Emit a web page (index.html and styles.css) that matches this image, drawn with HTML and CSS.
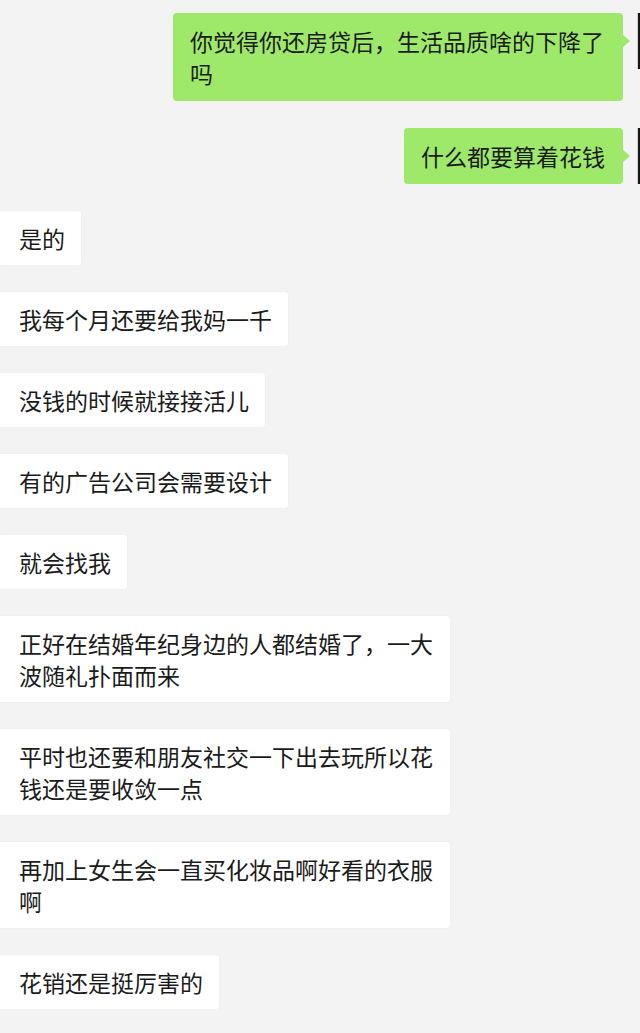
FILE: index.html
```html
<!DOCTYPE html>
<html lang="zh-CN">
<head>
    <meta charset="UTF-8">
    <meta name="viewport" content="width=device-width, initial-scale=1.0">
    <title>聊天记录</title>
    <link rel="stylesheet" href="styles.css">
</head>
<body>
    <div class="chat">
        <!-- 我发的 -->
        <div class="row row-me">
            <div class="bubble bubble-me">你觉得你还房贷后，生活品质啥的下降了吗</div>
            <div class="avatar"></div>
        </div>
        <div class="row row-me">
            <div class="bubble bubble-me">什么都要算着花钱</div>
            <div class="avatar"></div>
        </div>

        <!-- 对方 -->
        <div class="row row-other"><div class="bubble bubble-other">是的</div></div>
        <div class="row row-other"><div class="bubble bubble-other">我每个月还要给我妈一千</div></div>
        <div class="row row-other"><div class="bubble bubble-other">没钱的时候就接接活儿</div></div>
        <div class="row row-other"><div class="bubble bubble-other">有的广告公司会需要设计</div></div>
        <div class="row row-other"><div class="bubble bubble-other">就会找我</div></div>
        <div class="row row-other"><div class="bubble bubble-other">正好在结婚年纪身边的人都结婚了，一大波随礼扑面而来</div></div>
        <div class="row row-other"><div class="bubble bubble-other">平时也还要和朋友社交一下出去玩所以花钱还是要收敛一点</div></div>
        <div class="row row-other"><div class="bubble bubble-other">再加上女生会一直买化妆品啊好看的衣服啊</div></div>
        <div class="row row-other"><div class="bubble bubble-other">花销还是挺厉害的</div></div>
    </div>
</body>
</html>
```

FILE: styles.css
```css
body {
    margin: 0;
    padding: 0;
    background-color: #f3f3f3;
    font-family: "Noto Sans CJK SC", "Noto Sans", sans-serif;
    color: #1b1b1b;
    overflow: hidden;
}

.chat {
    width: 640px;
    display: flex;
    flex-direction: column;
    gap: 27px;
    padding-top: 13px;
}

.row {
    display: flex;
    align-items: flex-start;
}

.row-me {
    justify-content: flex-end;
    gap: 14px;
}

.row-other {
    justify-content: flex-start;
}

.bubble {
    position: relative;
    font-size: 23px;
    line-height: 32px;
    max-width: 415px;
}

.bubble-me {
    background-color: #9ee96a;
    padding: 12px 18px 12px 17px;
    border-radius: 4px;
}

/* 气泡小尖角 */
.bubble-me::after {
    content: "";
    position: absolute;
    right: -7px;
    top: 22px;
    border-style: solid;
    border-width: 6px 0 6px 7px;
    border-color: transparent transparent transparent #9ee96a;
}

.bubble-other {
    background-color: #ffffff;
    padding: 11px 16px 11px 19px;
    border-radius: 0 3px 3px 0;
    box-shadow: 0 0 2px rgba(0, 0, 0, 0.05);
}

/* 头像，只露出一条边 */
.avatar {
    width: 2px;
    height: 56px;
    background-color: #151515;
    border-left: 1px solid #d4d4d4;
}
```
